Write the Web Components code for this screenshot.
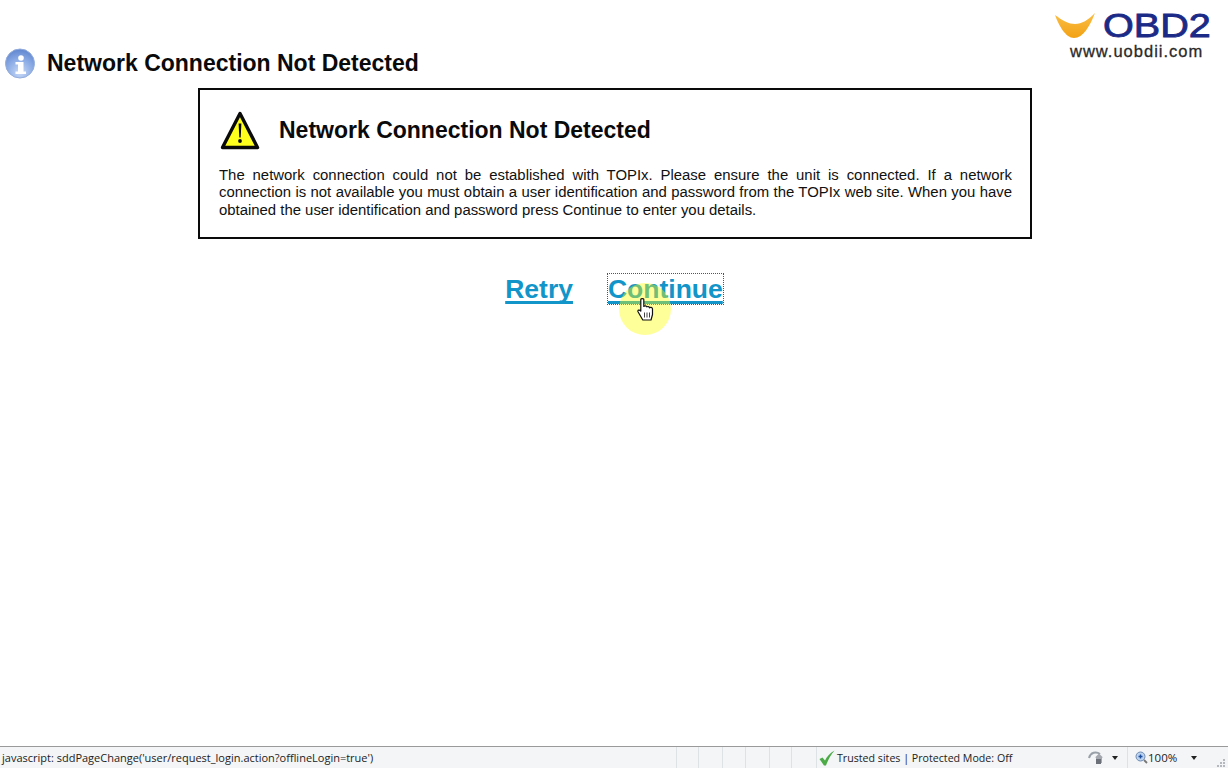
<!DOCTYPE html>
<html lang="en"><head><meta charset="utf-8"><title>Network Connection Not Detected</title>
<style>html,body{margin:0;padding:0;background:#fff;height:100%;overflow:hidden}body{font-family:"Liberation Sans",Arial,sans-serif}</style></head>
<body>
<app-page>
  <page-header slot="header" heading="Network Connection Not Detected"></page-header>
  <notice-box heading="Network Connection Not Detected">The network connection could not be established with TOPIx. Please ensure the unit is connected. If a network connection is not available you must obtain a user identification and password from the TOPIx web site. When you have obtained the user identification and password press Continue to enter you details.</notice-box>
  <action-links></action-links>
  <status-bar slot="status"></status-bar>
</app-page>
<script>
function def(name,html,init){customElements.define(name,class extends HTMLElement{connectedCallback(){if(this.shadowRoot)return;const r=this.attachShadow({mode:'open'});r.innerHTML=html;if(init)init(this,r)}})}

def('app-page',`<style>
:host{display:flex;flex-direction:column;height:100vh;width:100%;position:relative}
main{flex:1;min-height:0;display:flex;flex-direction:column}
</style><slot name="header"></slot><main><slot></slot></main><slot name="status"></slot>`);

def('page-header',`<style>
:host{display:flex;justify-content:space-between;align-items:flex-start;height:88px;box-sizing:border-box;padding:10px 16px 0 5px}
.t{display:flex;align-items:center;gap:12px;margin-top:38px;height:31px}
h1{margin:0;font:bold 23px/31px "Liberation Sans",Arial,sans-serif;color:#0a0a0a}
.logo{width:157px;height:52px;display:flex;flex-direction:column}
.top{display:flex;align-items:center;gap:8px;height:31px}
.o{font:normal 33px/31px "Liberation Sans",Arial,sans-serif;-webkit-text-stroke:.8px #1b2a86;color:#1b2a86;display:inline-block;transform:scaleX(1.2);transform-origin:left}
.u{font:normal 16.5px/20px "Liberation Sans",Arial,sans-serif;color:#2a2a2a;margin:0 0 0 15px;-webkit-text-stroke:.3px #2a2a2a;letter-spacing:1px;white-space:nowrap}
</style>
<div class="t"><svg width="30" height="31" viewBox="0 0 30 31"><defs><radialGradient id="g" cx=".5" cy=".8" r=".85"><stop offset="0" stop-color="#c8daf6"/><stop offset=".55" stop-color="#88a9e4"/><stop offset="1" stop-color="#5a80cc"/></radialGradient></defs><circle cx="15" cy="15.5" r="14.5" fill="url(#g)" stroke="#94addc"/><circle cx="16" cy="10" r="2.8" fill="#fff"/><path d="M10.500 14h8v9.500h2.500v2.500h-10.500v-2.500h2.500v-7h-2.500Z" fill="#fff"/></svg><h1></h1></div>
<div class="logo"><div class="top"><svg width="40" height="26" viewBox="0 0 40 26"><defs><linearGradient id="y" x1="0" y1="0" x2="0" y2="1"><stop offset="0" stop-color="#fbbf45"/><stop offset="1" stop-color="#f2a114"/></linearGradient></defs><path d="M0 2C8 8 14 11 20 11C27 11 33 7 40 0C35 13 28 25 19 25C11 25 4 13 0 2Z" fill="url(#y)"/></svg><span class="o">OBD2</span></div><div class="u">www.uobdii.com</div></div>`,
(h,r)=>{r.querySelector('h1').textContent=h.getAttribute('heading')});

def('notice-box',`<style>
:host{display:block;box-sizing:border-box;width:834px;height:151px;margin:0 0 0 198px;border:2px solid #0a0a0a;padding:20px 18px 0 19px}
.h{display:flex;align-items:center;gap:19px;height:40px}
svg{flex:none}
h2{margin:0;font:bold 23px/40px "Liberation Sans",Arial,sans-serif;color:#0a0a0a}
p{margin:17px 0 0;font:14.9px/17.4px "Liberation Sans",Arial,sans-serif;color:#111;text-align:justify}
</style>
<div class="h"><svg width="41" height="40" viewBox="0 0 41 40"><path d="M21 3.500L38.500 37.500H3.500Z" fill="#ffff1e" stroke="#0a0a0a" stroke-width="3.400" stroke-linejoin="round"/><path d="M19.600 13.500h2.800l-.7 14h-1.400Z" fill="#0a0a0a"/><circle cx="21" cy="31" r="1.900" fill="#0a0a0a"/></svg><h2></h2></div><p><slot></slot></p>`,
(h,r)=>{r.querySelector('h2').textContent=h.getAttribute('heading')});

def('action-links',`<style>
:host{display:flex;justify-content:center;gap:35px;margin-top:35px}
a{font:bold 26.5px/30px "Liberation Sans",Arial,sans-serif;color:#1295c9;text-decoration:underline;text-decoration-thickness:3px;text-underline-offset:3px;text-decoration-skip-ink:none;display:block;box-sizing:border-box;height:30px}
a.f{outline:1px dotted #555;outline-offset:0}
.w{position:relative}
.spot{position:absolute;left:11px;top:9px;width:52px;height:52px;border-radius:50%;background:rgba(255,255,0,.4);pointer-events:none}
.cur{position:absolute;left:29px;top:24px;pointer-events:none}
</style>
<a href="#" onclick="return false">Retry</a>
<div class="w"><a class="f" href="#" onclick="return false">Continue</a><div class="spot"></div>
<svg class="cur" width="18" height="23" viewBox="0 0 18 23"><path d="M3.800 1.600C3.800.3 6.800.3 6.800 1.600V8.500C7.300 7.500 9.500 7.500 9.800 9 10.300 8.200 12.300 8.300 12.600 9.800 13.200 9 15.300 9.300 15.500 10.800V16.500L14 22H5.800L1 13.800C.4 12.200 2.200 11.300 3.800 13Z" fill="#fff" stroke="#111" stroke-width="1.200" stroke-linejoin="round"/><path d="M7.500 14.500v5M10 14.500v5M12.500 14.500v5" stroke="#111" stroke-width=".8"/></svg></div>`);

def('status-bar',`<style>
:host{display:flex;height:22px;box-sizing:border-box;border-top:1px solid #9a9a9a;background:#f3f5f7;font:11px/21px "Open Sans","Noto Sans",sans-serif;color:#222;align-items:stretch;white-space:nowrap;overflow:hidden}
.msg{width:676px;padding-left:2px;box-sizing:border-box;overflow:hidden}
.c{border-left:1px solid #dfe2e5;box-sizing:border-box}
.zone{width:266px;display:flex;align-items:center;gap:2px;padding-left:2px;font-size:10.65px}
.zone span{padding-top:1px}
.sec{width:45px;box-sizing:border-box;display:flex;align-items:center;gap:8px;padding-left:6px}
.zoom{flex:1;display:flex;align-items:center;padding-left:7px;font-size:11.5px}
.ar{width:0;height:0;border:3.500px solid transparent;border-top:4px solid #222;border-bottom:0}
.grip{margin-left:auto;margin-right:2px;align-self:flex-end}
</style>
<div class="msg">javascript: sddPageChange('user/request_login.action?offlineLogin=true')</div>
<div class="c" style="width:22px"></div><div class="c" style="width:24px"></div><div class="c" style="width:23px"></div><div class="c" style="width:24px"></div><div class="c" style="width:22px"></div><div class="c" style="width:25px"></div>
<div class="c zone"><svg width="16" height="16" viewBox="0 0 16 16"><path d="M.5 9L3.500 7.500 6 10.500C8 6.500 11 3 15.500 .5 11.500 5 9 10 7 15.500H5Z" fill="#4cab47"/></svg><span>Trusted sites | Protected Mode: Off</span></div>
<div class="sec"><svg width="16" height="15" viewBox="0 0 16 15"><path d="M1 8C2.500 2.500 8 1 12 4" fill="none" stroke="#9aa0a8" stroke-width="2"/><path d="M7 7.500L11 3.500 15 7.500H14V13H8V7.500Z" fill="#a4a8ae"/><path d="M8 9h5v5H8Z" fill="#6c7078"/></svg><span class="ar"></span></div>
<div class="c zoom"><svg width="13" height="13" viewBox="0 0 13 13"><circle cx="5.500" cy="5.500" r="4.500" fill="#bcd3ef" stroke="#6f8bb0"/><path d="M3.500 5.500h4M5.500 3.500v4" stroke="#1c4fa0" stroke-width="1.400"/><path d="M9 9l3 3" stroke="#777" stroke-width="1.800"/></svg><span>100%</span><span class="ar" style="margin-left:14px"></span><svg class="grip" width="9" height="9" viewBox="0 0 9 9" fill="#b5b8bc"><rect x="6" y="0" width="2" height="2"/><rect x="3" y="3" width="2" height="2"/><rect x="6" y="3" width="2" height="2"/><rect x="0" y="6" width="2" height="2"/><rect x="3" y="6" width="2" height="2"/><rect x="6" y="6" width="2" height="2"/></svg></div>`);
</script>
</body></html>
